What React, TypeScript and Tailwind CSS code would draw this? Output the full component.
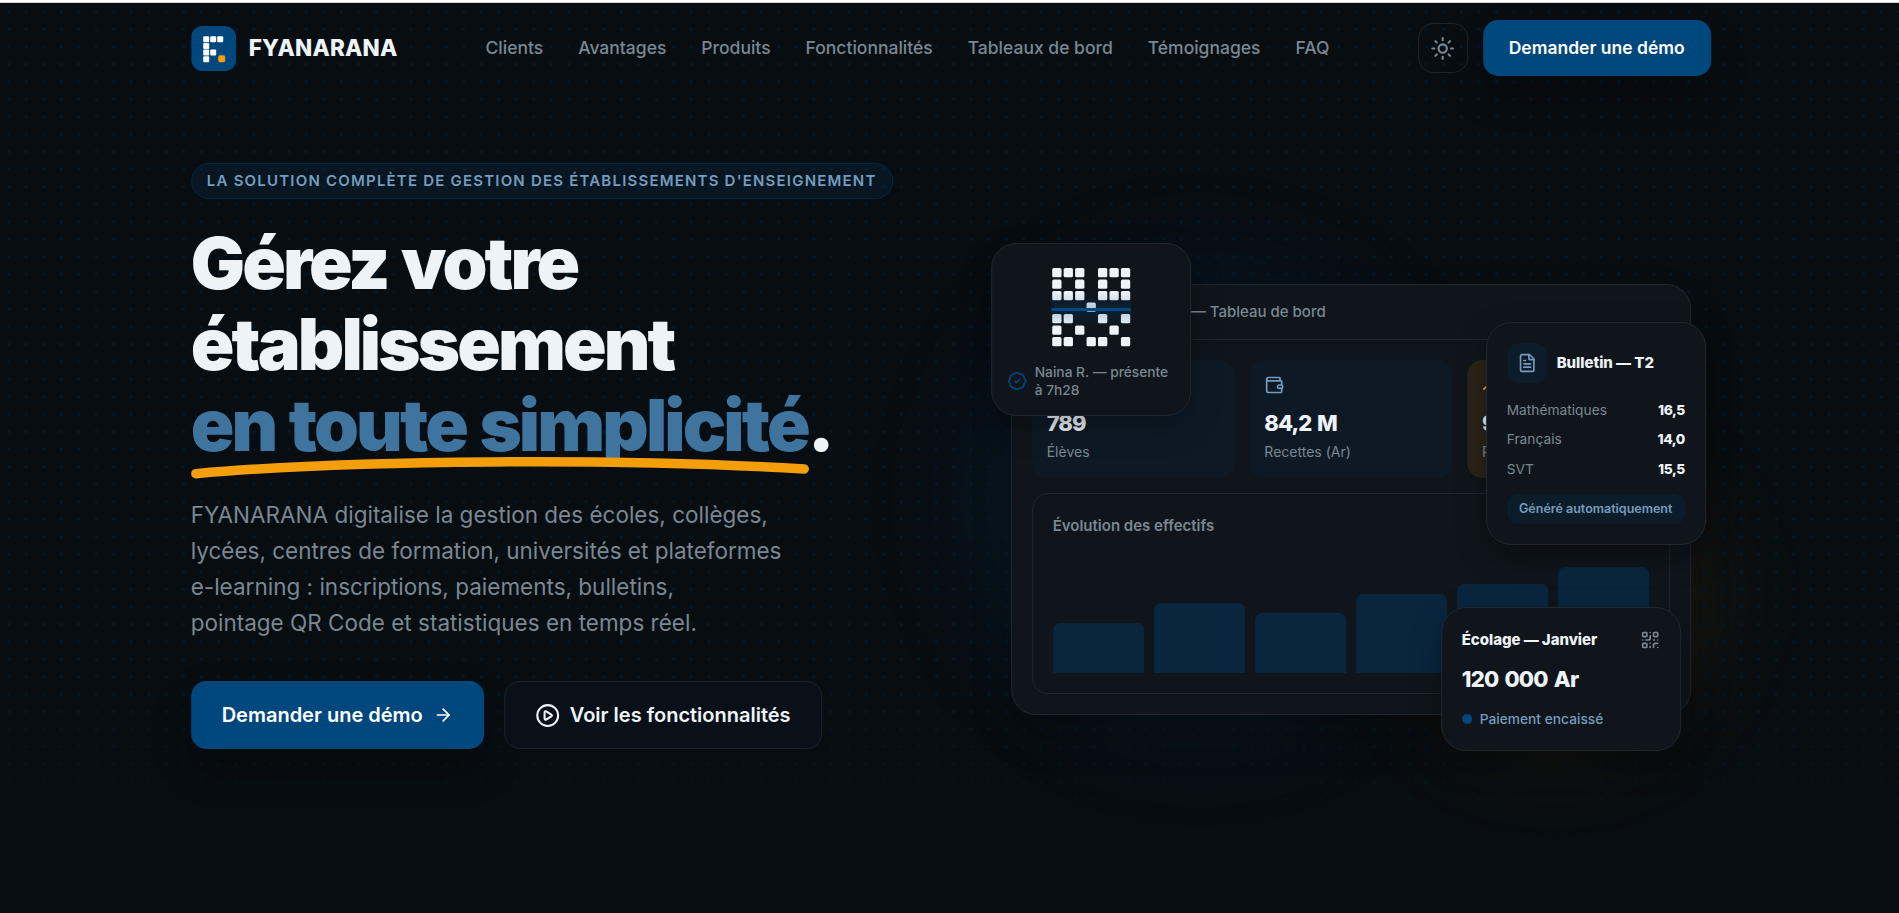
import type { ReactNode } from "react";
import {
  ArrowRight,
  BadgeCheck,
  CirclePlay,
  FileText,
  GraduationCap,
  QrCode,
  Sun,
  TrendingUp,
  Wallet,
} from "lucide-react";

const NAV_LINKS = [
  "Clients",
  "Avantages",
  "Produits",
  "Fonctionnalités",
  "Tableaux de bord",
  "Témoignages",
  "FAQ",
];

const QR_ROWS = [
  "1110111",
  "1010101",
  "1110111",
  "0001000",
  "1100101",
  "1010010",
  "1101101",
];

const BARS = [50, 70, 60, 79, 89, 106];

const GRADES = [
  { subject: "Mathématiques", grade: "16,5" },
  { subject: "Français", grade: "14,0" },
  { subject: "SVT", grade: "15,5" },
];

export default function App() {
  return (
    <div className="relative h-[913px] w-full overflow-hidden bg-[#080d11] font-['Inter',sans-serif] text-[#eef3f8] antialiased">
      <Background />
      <div className="relative h-[3px] border-b border-[#d4d4d4] bg-white" />
      <div className="relative mx-auto w-[1520px] translate-x-[1.2px]">
        <Header />
        <main className="flex">
          <Hero />
          <Showcase />
        </main>
      </div>
    </div>
  );
}

function Background() {
  return (
    <>
      <div className="absolute top-[270px] left-[970px] h-[460px] w-[460px] rounded-full bg-[#00467b]/15 blur-[50px]" />
      <div className="absolute top-[440px] left-[1400px] h-[310px] w-[310px] rounded-full bg-[#f59e0b]/9 blur-[50px]" />
      <div className="absolute inset-x-0 top-[3px] bottom-0 bg-[radial-gradient(circle,#031828_1.4px,transparent_2px)] [background-size:17.5px_17.5px] [mask-image:linear-gradient(to_bottom,black_75%,transparent_96%)]" />
    </>
  );
}

function Header() {
  return (
    <header className="flex h-[90px] items-center">
      <Logo />
      <span className="ml-[13px] w-[149px] text-[22.5px] font-extrabold tracking-[0.01em] whitespace-nowrap">
        FYANARANA
      </span>
      <nav className="ml-[87.8px] flex gap-[35px] text-[17.5px] font-medium whitespace-nowrap text-[#7b8791]">
        {NAV_LINKS.map((link) => (
          <a key={link}>{link}</a>
        ))}
      </nav>
      <button className="ml-auto flex size-[50px] items-center justify-center rounded-[15px] border border-[#1d252c] text-[#7b8791]">
        <Sun className="size-[25px]" strokeWidth={2} />
      </button>
      <button className="ml-[15px] h-14 w-[228px] rounded-[15px] bg-[#00477d] text-[17.5px] font-semibold text-white shadow-[0_20px_40px_-5px_rgba(0,0,0,0.3)]">
        Demander une démo
      </button>
    </header>
  );
}

function Logo() {
  return (
    <svg viewBox="0 0 45 45" className="size-[45px]">
      <rect width="45" height="45" rx="11.5" fill="#00477d" />
      <g fill="#ffffff">
        <rect x="12" y="10.3" width="6" height="6" rx="1" />
        <rect x="19" y="10.3" width="6" height="6" rx="1" />
        <rect x="26" y="10.3" width="6" height="6" rx="1" />
        <rect x="12" y="17" width="6" height="6" rx="1" />
        <rect x="12" y="23.6" width="6" height="6" rx="1" />
        <rect x="19" y="23.6" width="6" height="6" rx="1" />
        <rect x="12" y="30.2" width="6" height="6" rx="1" />
      </g>
      <rect x="27" y="29.3" width="7" height="7" rx="1.8" fill="#f59e0b" />
    </svg>
  );
}

function Hero() {
  return (
    <section className="w-[800px] shrink-0 pt-[70px]">
      <div className="flex h-9 w-[702px] items-center justify-center rounded-full border border-[#00294a] bg-[#00467b]/15 text-[15px] font-semibold tracking-[0.08em] whitespace-nowrap text-[#759cbf]">
        LA SOLUTION COMPLÈTE DE GESTION DES ÉTABLISSEMENTS D'ENSEIGNEMENT
      </div>
      <h1 className="mt-[23px] text-[72px] leading-[81px] font-black tracking-[-0.04em] whitespace-nowrap [word-spacing:2px]">
        <span className="block">Gérez votre</span>
        <span className="block">établissement</span>
        <span className="relative block">
          <span className="text-[#3f749f]">en toute simplicité</span>.
          <svg
            viewBox="0 0 618 24"
            fill="none"
            className="absolute top-[71px] left-0 h-6 w-[618px]"
          >
            <path
              d="M4.500 18.700C160 4.500 430 3 613 14"
              stroke="#f59e0b"
              strokeWidth="9.500"
              strokeLinecap="round"
            />
          </svg>
        </span>
      </h1>
      <p className="mt-8 text-[22.5px] leading-9 whitespace-nowrap text-[#7b8791]">
        FYANARANA digitalise la gestion des écoles, collèges,
        <br />
        lycées, centres de formation, universités et plateformes
        <br />
        e-learning : inscriptions, paiements, bulletins,
        <br />
        pointage QR Code et statistiques en temps réel.
      </p>
      <div className="mt-10 flex gap-5 text-[20px] font-semibold whitespace-nowrap">
        <button className="flex h-[68px] w-[293px] items-center justify-center gap-[10px] rounded-[15px] bg-[#00477d] text-white shadow-[0_20px_40px_-5px_rgba(0,0,0,0.35)]">
          Demander une démo
          <ArrowRight className="size-5" />
        </button>
        <button className="flex h-[68px] w-[318px] items-center justify-center gap-[10px] rounded-[15px] border border-[#1d252c] bg-[#0a1017]">
          <CirclePlay className="size-[25px]" />
          Voir les fonctionnalités
        </button>
      </div>
    </section>
  );
}

function Showcase() {
  return (
    <section className="relative w-[720px] pt-[191px]">
      <Dashboard />
      <PresenceCard />
      <ReportCard />
      <PaymentCard />
    </section>
  );
}

function Dashboard() {
  return (
    <div className="ml-[20px] h-[431px] w-[680px] overflow-hidden rounded-[25px] border border-[#202930] bg-[#0f151b] shadow-[0_20px_40px_rgba(0,0,0,0.2)]">
      <div className="flex h-[55px] items-center gap-[7px] border-b border-[#202930] pl-5">
        <span className="size-[12px] rounded-full bg-[#202930]" />
        <span className="size-[12px] rounded-full bg-[#202930]" />
        <span className="size-[12px] rounded-full bg-[#202930]" />
        <span className="ml-auto w-[370px] text-[15px] font-medium whitespace-nowrap text-[#7b8791]">
          <span className="-ml-[3px]">— Tableau de bord</span>
        </span>
        <span className="w-[119px]" />
      </div>
      <div className="p-5">
        <div className="grid grid-cols-3 gap-[15px]">
          <Stat
            icon={<GraduationCap className="size-5" strokeWidth={1.8} />}
            value="789"
            label="Élèves"
          />
          <Stat
            icon={<Wallet className="size-5" strokeWidth={2} />}
            value="84,2 M"
            label="Recettes (Ar)"
          />
          <Stat
            icon={<TrendingUp className="size-5 text-[#f5b31b]" strokeWidth={2} />}
            value="96 %"
            label="Présence"
            accent
          />
        </div>
        <div className="mt-[15px] flex h-[201px] flex-col justify-between rounded-[15px] border border-[#202930] p-5">
          <div className="text-[15px] leading-6 font-semibold text-[#7b8791]">
            Évolution des effectifs
          </div>
          <div className="flex items-end gap-[10px]">
            {BARS.map((height) => (
              <div
                key={height}
                className="flex-1 rounded-t-[7px] bg-[#09263e]"
                style={{ height }}
              />
            ))}
          </div>
        </div>
      </div>
    </div>
  );
}

interface StatProps {
  icon: ReactNode;
  value: string;
  label: string;
  accent?: boolean;
}

function Stat({ icon, value, label, accent }: StatProps) {
  return (
    <div
      className={`flex h-[118px] flex-col rounded-[15px] px-[15px] pt-[15px] text-[#759cbf] ${
        accent ? "bg-[#2a2418]" : "bg-[#0d1a26]"
      }`}
    >
      {icon}
      <div className="mt-[13px] text-[22px] leading-[30px] font-extrabold tracking-[-0.045em] text-[#eef3f8] [word-spacing:2px]">
        {value}
      </div>
      <div className="mt-[4px] text-[14px] leading-5 text-[#7b8791]">{label}</div>
    </div>
  );
}

function PresenceCard() {
  return (
    <div className="absolute top-[150px] left-0 flex h-[173px] w-[200px] flex-col items-center rounded-[25px] border border-[#202930] bg-[#0f151b] pt-[24px] shadow-[0_12px_30px_rgba(0,0,0,0.3)]">
      <svg viewBox="0 0 80 80" className="size-20 shrink-0">
        <defs>
          <linearGradient id="scan" x1="0" y1="0" x2="0" y2="1">
            <stop offset="0" stopColor="#00467b" stopOpacity="0" />
            <stop offset="0.5" stopColor="#00467b" stopOpacity="0.25" />
            <stop offset="1" stopColor="#00467b" stopOpacity="0" />
          </linearGradient>
        </defs>
        {QR_ROWS.map((row, y) =>
          row
            .split("")
            .map((cell, x) =>
              cell === "1" ? (
                <rect
                  key={`${x}-${y}`}
                  x={1 + x * 11.45}
                  y={y * 11.5}
                  width="9.3"
                  height="9.3"
                  rx="1.6"
                  fill="#eef3f8"
                />
              ) : null,
            ),
        )}
        <rect y="24" width="80" height="35" fill="url(#scan)" />
        <rect y="40" width="80" height="3" rx="1.5" fill="#004a83" />
      </svg>
      <div className="mt-[15px] flex w-full items-center gap-2 pl-[15px] text-[13.75px] leading-[18px] font-medium text-[#7b8791]">
        <BadgeCheck className="size-5 shrink-0 text-[#00467b]" strokeWidth={2} />
        <span className="whitespace-nowrap">
          Naina R. — présente
          <br />à 7h28
        </span>
      </div>
    </div>
  );
}

function ReportCard() {
  return (
    <div className="absolute top-[229px] left-[495px] h-[223px] w-[220px] rounded-[25px] border border-[#202930] bg-[#0f151b] p-5 shadow-[0_12px_30px_rgba(0,0,0,0.35)]">
      <div className="flex items-center gap-[10px]">
        <div className="flex size-10 items-center justify-center rounded-[12px] bg-[#0c1c29] text-[#759cbf]">
          <FileText className="size-5" strokeWidth={2} />
        </div>
        <span className="text-[15px] font-extrabold tracking-[-0.003em] whitespace-nowrap">
          Bulletin — T2
        </span>
      </div>
      <div className="mt-[16.5px] flex flex-col gap-[9.5px] text-[13.75px] leading-5">
        {GRADES.map(({ subject, grade }) => (
          <div key={subject} className="flex justify-between">
            <span className="text-[#7b8791]">{subject}</span>
            <span className="font-extrabold tracking-[-0.035em]">{grade}</span>
          </div>
        ))}
      </div>
      <div className="mt-[15.5px] flex h-[30px] items-center justify-center rounded-[10px] bg-[#0c1c29] text-[12.5px] font-semibold whitespace-nowrap text-[#759cbf]">
        Généré automatiquement
      </div>
    </div>
  );
}

function PaymentCard() {
  return (
    <div className="absolute top-[514px] left-[450px] h-[144px] w-[240px] rounded-[25px] border border-[#202930] bg-[#0f151b] px-5 pt-5 shadow-[0_12px_30px_rgba(0,0,0,0.35)]">
      <div className="flex items-center justify-between leading-6">
        <span className="text-[15px] font-extrabold tracking-[-0.003em] whitespace-nowrap">
          Écolage — Janvier
        </span>
        <QrCode className="size-5 text-[#7b8791]" strokeWidth={2} />
      </div>
      <div className="mt-[11px] text-[22px] leading-[32px] font-extrabold tracking-[-0.035em] [word-spacing:2px]">
        120 000 Ar
      </div>
      <div className="mt-[13px] flex items-center gap-2 text-[13.75px] leading-[22px] font-medium text-[#759cbf]">
        <span className="size-[10px] rounded-full bg-[#00477d]" />
        Paiement encaissé
      </div>
    </div>
  );
}
